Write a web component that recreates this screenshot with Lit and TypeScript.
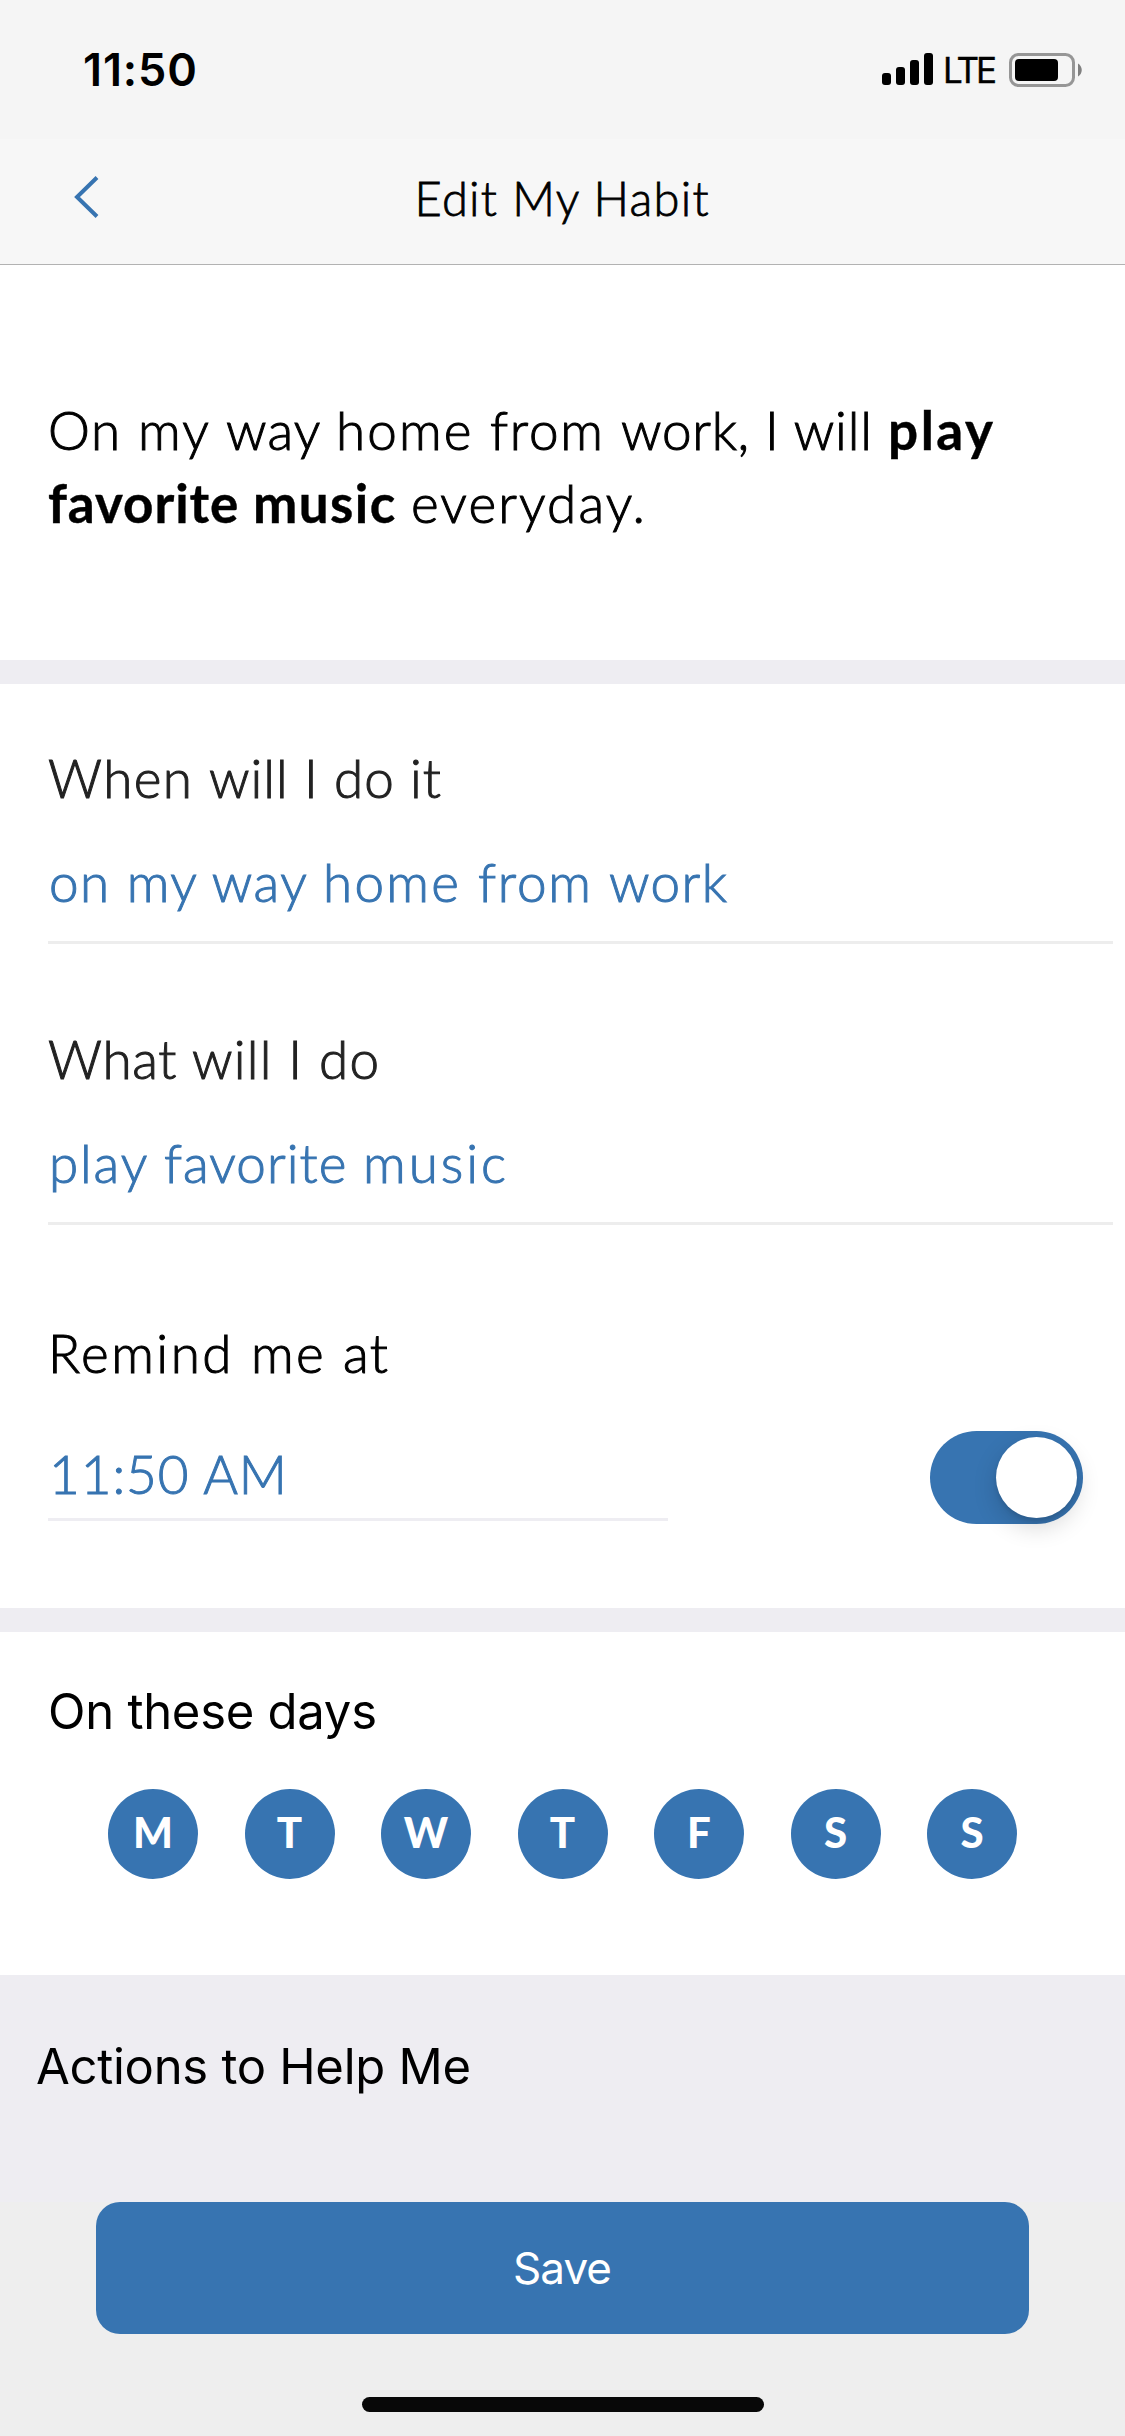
import { LitElement, html, css } from "lit";
import { customElement, property } from "lit/decorators.js";

/** A single run of text whose tracking is set so that it fills a given width. */
@customElement("fit-text")
class FitText extends LitElement {
  @property({ type: Number }) width = 0;
  @property() text = "";

  static styles = css`
    :host { display: inline-block; white-space: pre; }
    .run { display: inline-block; white-space: pre; }
  `;

  updated() {
    const run = this.renderRoot.querySelector(".run") as HTMLElement;
    run.style.letterSpacing = "0px";
    run.style.marginRight = "0px";
    const natural = run.getBoundingClientRect().width;
    const spaced = this.text.endsWith(" ");
    const gaps = spaced ? this.text.length : Math.max(1, this.text.length - 1);
    const gap = (this.width - natural) / gaps;
    run.style.letterSpacing = gap.toFixed(3) + "px";
    run.style.marginRight = spaced ? "0px" : (-gap).toFixed(3) + "px";
  }

  render() {
    return html`<span class="run">${this.text}</span>`;
  }
}

type Run = [text: string, width: number];

const runs = (items: Run[]) =>
  items.map(([text, width]) => html`<fit-text .text=${text} .width=${width}></fit-text>`);

@customElement("app-root")
class AppRoot extends LitElement {
  private days = ["M", "T", "W", "T", "F", "S", "S"];

  static styles = css`
    :host {
      display: block;
      width: 1125px;
      height: 2436px;
      background: #fff;
      color: #000;
      font-family: Lato, "Open Sans", sans-serif;
      font-size: 53px;
      font-weight: 300;
      overflow: hidden;
    }
    * { box-sizing: border-box; }
    .screen { display: flex; flex-direction: column; height: 2436px; }
    .top { height: 265px; background: #f7f7f7; border-bottom: 1px solid #b2b2b2; flex: none; }
    .status { height: 139px; padding: 0 43px 0 83px; display: flex; justify-content: space-between; align-items: center; background: #f5f5f5; }
    .clock { font: 600 45px/60px Inter, sans-serif; }
    .signals { display: flex; align-items: center; }
    .bars { margin-top: -1px; }
    .lte { font: 400 35px/50px Inter, sans-serif; margin: 1px 12px 0 10px; -webkit-text-stroke: 0.4px currentColor; }
    .nav { display: grid; grid-template-columns: 200px 1fr 202px; align-items: center; height: 119px; }
    .back { margin-left: 73px; display: block; margin-top: -3px; }
    .light { -webkit-text-stroke: 1px currentColor; }
    .title { text-align: center; font-size: 47px; line-height: 60px; margin-top: -1px; -webkit-text-stroke: 0.8px currentColor; }
    .summary { height: 395px; padding: 128px 48px 0; line-height: 73px; flex: none; }
    .line { display: flex; height: 73px; }
    .bold { font-weight: 700; display: flex; -webkit-text-stroke: 0.4px currentColor; }
    .band { height: 24px; background: #eeedf2; flex: none; }
    .fields { height: 924px; padding-left: 48px; flex: none; display: flex; flex-direction: column; }
    .label { display: flex; color: #222; line-height: 64px; height: 64px; }
    .field { width: 1065px; border-bottom: 3px solid #ededed; display: flex; flex-direction: column; color: #3774b1; }
    .when { height: 260px; padding-top: 62px; gap: 40px; }
    .what { height: 281px; padding-top: 83px; gap: 40px; }
    .value { display: flex; line-height: 64px; height: 64px; padding-left: 1px; }
    .remind { padding-top: 96px; height: 206px; }
    .black { color: #000; }
    .timerow { display: flex; justify-content: space-between; align-items: flex-start; padding-right: 42px; }
    .time { width: 620px; height: 90px; border-bottom: 3px solid #eeedf2; color: #3774b1; padding: 11px 0 0 1px; line-height: 64px; }
    .toggle { width: 153px; height: 93px; border-radius: 47px; background: #3774b1; padding: 6px; display: flex; justify-content: flex-end; }
    .knob { width: 81px; height: 81px; border-radius: 50%; background: #fff; box-shadow: 0 9px 24px rgba(0,0,0,.16), 0 3px 4px rgba(0,0,0,.1); }
    .days { height: 343px; padding: 48px 0 0; flex: none; font-family: Inter, sans-serif; }
    .daystitle { padding-left: 48px; font-size: 49px; font-weight: 400; line-height: 64px; height: 64px; }
    .row { display: flex; gap: 46.5px; margin: 45px 0 0 108px; }
    .day { width: 90px; height: 90px; border-radius: 50%; background: #3774b1; color: #fff; display: flex; align-items: center; justify-content: center; font: 900 42px/50px Lato, sans-serif; padding-bottom: 4px; }
    .actions { height: 227px; background: #eeedf2; padding: 60px 0 0 36px; font: 400 49px/64px Inter, sans-serif; flex: none; }
    .footer { height: 234px; background: #eee; display: flex; flex-direction: column; align-items: center; flex: none; }
    .save { width: 933px; height: 132px; border: 0; border-radius: 24px; background: #3774b1; color: #fff; font: 400 44px/60px Inter, sans-serif; display: flex; align-items: center; justify-content: center; padding: 0; }
    .home { width: 402px; height: 15px; border-radius: 8px; background: #080808; margin-top: 63px; }
  `;

  render() {
    return html`
      <div class="screen">
        <header class="top">
          <div class="status">
            <div class="clock">${runs([["11:50", 114]])}</div>
            <div class="signals">
              <svg class="bars" width="51" height="32" viewBox="0 0 51 32">
                <rect x="0" y="20" width="9" height="12" rx="3" />
                <rect x="14" y="14" width="9" height="18" rx="3" />
                <rect x="28" y="7" width="9" height="25" rx="3" />
                <rect x="42" y="0" width="9" height="32" rx="3" />
              </svg>
              <span class="lte">${runs([["LTE", 54]])}</span>
              <svg width="73" height="34" viewBox="0 0 73 34">
                <rect x="1.5" y="1.5" width="63" height="31" rx="8" fill="none" stroke="#969696" stroke-width="3" />
                <rect x="6" y="6" width="43" height="22" rx="4" />
                <path d="M69 10.500C74 13.500 74 20.500 69 23.500Z" fill="#808080" />
              </svg>
            </div>
          </div>
          <nav class="nav">
            <svg class="back" width="28" height="42" viewBox="0 0 28 42">
              <path d="M24 1.500L4 21L24 40.500" fill="none" stroke="#3774b1" stroke-width="4" />
            </svg>
            <div class="title">${runs([["Edit My Habit", 294]])}</div>
          </nav>
        </header>

        <section class="summary light">
          <div class="line">
            ${runs([["On ", 90], ["my ", 88], ["way ", 110], ["home ", 154], ["from ", 131], ["work, ", 144], ["I will ", 123]])}
            <span class="bold">${runs([["play", 105]])}</span>
          </div>
          <div class="line">
            <span class="bold">${runs([["favorite ", 205], ["music ", 158]])}</span>
            ${runs([["everyday.", 234]])}
          </div>
        </section>
        <div class="band"></div>

        <section class="fields light">
          <div class="field when">
            <div class="label">${runs([["When ", 161], ["will I do it", 232]])}</div>
            <div class="value">${runs([["on my way ", 274], ["home ", 155], ["from ", 131], ["work", 118]])}</div>
          </div>
          <div class="field what">
            <div class="label">${runs([["What ", 144], ["will I do", 187]])}</div>
            <div class="value">${runs([["play ", 115], ["favorite ", 199], ["music", 143]])}</div>
          </div>
          <div class="remind label black">${runs([["Remind ", 203], ["me ", 92], ["at", 45]])}</div>
          <div class="timerow">
            <div class="time">${runs([["11:50 AM", 238]])}</div>
            <div class="toggle"><div class="knob"></div></div>
          </div>
        </section>
        <div class="band"></div>

        <section class="days">
          <div class="daystitle">${runs([["On these days", 329]])}</div>
          <div class="row">
            ${this.days.map((label) => html`<div class="day">${label}</div>`)}
          </div>
        </section>

        <section class="actions">${runs([["Actions to Help Me", 435]])}</section>
        <footer class="footer">
          <button class="save">${runs([["Save", 99]])}</button>
          <div class="home"></div>
        </footer>
      </div>
    `;
  }
}
